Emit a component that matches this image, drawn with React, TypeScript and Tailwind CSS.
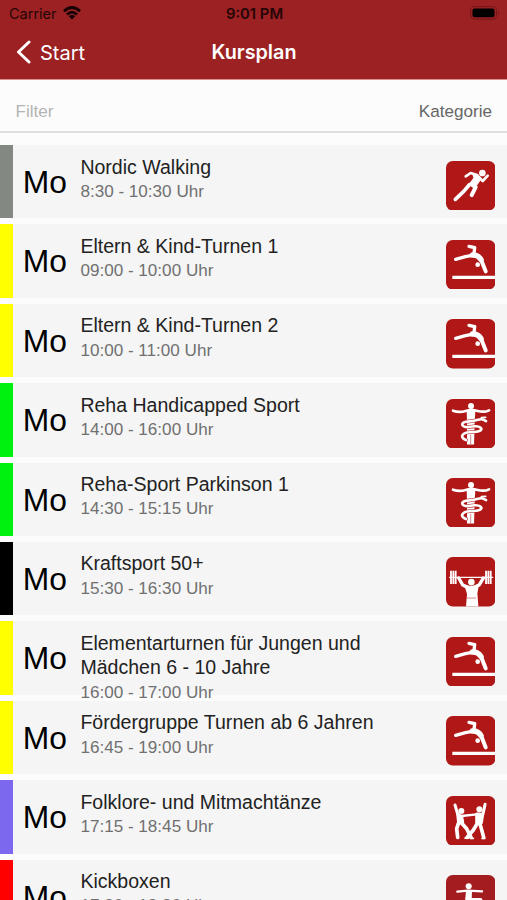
import type { ReactNode } from "react";

type Sport = "run" | "gymnastics" | "reha" | "weights" | "dance" | "kick";

type Course = {
  title: string;
  time: string;
  color: string;
  sport: Sport;
};

const courses: Course[] = [
  { title: "Nordic Walking", time: "8:30 - 10:30 Uhr", color: "bg-[#838982]", sport: "run" },
  { title: "Eltern & Kind-Turnen 1", time: "09:00 - 10:00 Uhr", color: "bg-[#ffff00]", sport: "gymnastics" },
  { title: "Eltern & Kind-Turnen 2", time: "10:00 - 11:00 Uhr", color: "bg-[#ffff00]", sport: "gymnastics" },
  { title: "Reha Handicapped Sport", time: "14:00 - 16:00 Uhr", color: "bg-[#00f010]", sport: "reha" },
  { title: "Reha-Sport Parkinson 1", time: "14:30 - 15:15 Uhr", color: "bg-[#00f010]", sport: "reha" },
  { title: "Kraftsport 50+", time: "15:30 - 16:30 Uhr", color: "bg-black", sport: "weights" },
  { title: "Elementarturnen für Jungen und Mädchen 6 - 10 Jahre", time: "16:00 - 17:00 Uhr", color: "bg-[#ffff00]", sport: "gymnastics" },
  { title: "Fördergruppe Turnen ab 6 Jahren", time: "16:45 - 19:00 Uhr", color: "bg-[#ffff00]", sport: "gymnastics" },
  { title: "Folklore- und Mitmachtänze", time: "17:15 - 18:45 Uhr", color: "bg-[#7b68ee]", sport: "dance" },
  { title: "Kickboxen", time: "17:30 - 18:30 Uhr", color: "bg-[#ff0000]", sport: "kick" },
];

const drawings: Record<Sport, ReactNode> = {
  run: (
    <>
      <circle cx="109" cy="36" r="10" fill="#fff" stroke="none" />
      <path d="M80 38 97 43 105 53 92 72 80 78 70 69 84 51Z" fill="#fff" strokeWidth="3" />
      <path d="M93 42 74 36 59 46" strokeWidth="8" />
      <path d="M98 48 110 60 125 44" strokeWidth="8" />
      <path d="M77 69 89 78 77 102" strokeWidth="12" />
      <path d="M70 71 53 91 28 115" strokeWidth="11" />
    </>
  ),
  gymnastics: (
    <>
      <path d="M69 19 86 23 84 40" strokeWidth="10" />
      <path d="M83 45 58 50 29 58" strokeWidth="10" />
      <path d="M79 45Q96 44 105 59" strokeWidth="16" />
      <path d="M104 56 119 94" strokeWidth="12" />
      <circle cx="95" cy="74" r="7" fill="#fff" stroke="none" />
      <path d="M19 112H149" strokeWidth="9" strokeLinecap="butt" />
    </>
  ),
  reha: (
    <>
      <circle cx="75" cy="21" r="9" fill="#fff" stroke="none" />
      <path d="M21 35Q39 42 59 36L75 32 95 36Q115 41 129 34" strokeWidth="8" />
      <path d="M62 32H88L86 72 84 136H63V78Z" fill="#fff" stroke="none" />
      <path
        d="M120 66C102 54 96 66 70 67C42 68 42 85 67 84C112 76 118 97 85 99C47 98 38 114 60 123"
        stroke="#b01717"
        strokeWidth="11"
      />
      <path
        d="M120 66C102 54 96 66 70 67C42 68 42 85 67 84C112 76 118 97 85 99C47 98 38 114 60 123"
        strokeWidth="8"
      />
      <path d="M74 108V134" stroke="#b01717" strokeWidth="1.5" />
      <path d="M106 56 119 55" strokeWidth="5" />
    </>
  ),
  weights: (
    <>
      <path d="M11 61H140" strokeWidth="4" />
      <path d="M15 41V81M22 41V81M29 41V81M120 41V81M127 41V81M134 41V81" strokeWidth="5.5" strokeLinecap="butt" />
      <path d="M38 63 50 84 65 91M112 63 99 84 84 91" strokeWidth="10" />
      <circle cx="76" cy="75" r="10" fill="#fff" stroke="none" />
      <path d="M54 82 68 86H84L99 82 94 109 97 148H60L63 111Z" fill="#fff" stroke="none" />
      <path d="M64 123H89" stroke="#b01717" strokeWidth="1.5" />
    </>
  ),
  dance: (
    <>
      <circle cx="46" cy="45" r="9" fill="#fff" stroke="none" />
      <circle cx="100" cy="40" r="9" fill="#fff" stroke="none" />
      <path d="M27 27 35 54" strokeWidth="9" />
      <path d="M117 25 111 53" strokeWidth="9" />
      <path d="M46 60 92 55" strokeWidth="7" />
      <path d="M35 54 47 62 50 78 38 82Z" fill="#fff" strokeWidth="9" />
      <path d="M92 54 110 55 106 80H92Z" fill="#fff" strokeWidth="9" />
      <path d="M38 80 32 98 35 124M46 80 62 98 75 124" strokeWidth="11" />
      <path d="M94 82 82 102 63 124M101 81 106 98 113 124" strokeWidth="11" />
      <path d="M57 126H68M75 127H82M108 127H116" strokeWidth="5" />
    </>
  ),
  kick: (
    <>
      <circle cx="68" cy="34" r="9" fill="#fff" stroke="none" />
      <path d="M34 50 66 47 108 49" strokeWidth="7" />
      <path d="M60 46H78L77 71H58Z" fill="#fff" stroke="none" />
      <path d="M68 74H104M63 70 61 94 68 119" strokeWidth="10" />
    </>
  ),
};

const SportIcon = ({ sport }: { sport: Sport }) => {
  return (
    <svg viewBox="0 0 148 148" className="size-[49.4px] shrink-0" fill="none" stroke="#fff" strokeLinecap="round" strokeLinejoin="round">
      <rect width="148" height="148" rx="20" fill={sport === "kick" ? "#a31d20" : "#b01717"} stroke="none" />
      {drawings[sport]}
    </svg>
  );
};

const CourseRow = ({ course }: { course: Course }) => {
  return (
    <li className="flex h-[73.4px] shrink-0 bg-[#f5f5f5]">
      <div className={`w-[13.3px] shrink-0 ${course.color}`} />
      <div className="w-[67.1px] shrink-0 pl-[9.5px] pt-[13px] text-[31.8px] leading-[48px] text-black">Mo</div>
      <div className="min-w-0 flex-1 pt-[9.5px]">
        <h2 className="w-[310px] text-[19.55px] leading-[24.4px] text-[#222]">{course.title}</h2>
        <p className="text-[17.1px] leading-[25.2px] text-[#707070]">{course.time}</p>
      </div>
      <div className="shrink-0 pr-3 pt-[15.5px]">
        <SportIcon sport={course.sport} />
      </div>
    </li>
  );
};

const StatusBar = () => {
  return (
    <div className="grid h-7 grid-cols-3 items-center pl-[9px] pr-[7px] text-[#250606]">
      <div className="flex items-center gap-[6px] text-[14.5px] leading-none">
        Carrier
        <svg viewBox="0 0 18 14" className="mb-[2px] h-[14px] w-[18px]" fill="none" stroke="#150303" strokeWidth="2.7">
          <path d="M1 5.2Q9-2.2 17 5.2M4 8.4Q9 3.8 14 8.4" />
          <path d="M5.8 10.2Q9 7.5 12.2 10.2L9 13.5Z" fill="#150303" stroke="none" />
        </svg>
      </div>
      <div className="text-center text-[14.8px] font-semibold leading-none">9:01 PM</div>
      <svg viewBox="0 0 30 14" className="mb-[2px] h-[14px] w-[30px] justify-self-end">
        <rect x=".6" y=".6" width="26" height="12.6" rx="4" fill="none" stroke="#741719" />
        <rect x="2.5" y="2.5" width="22" height="8.8" rx="2" fill="#000" />
        <path d="M28 5Q30 7 28 9Z" fill="#741719" />
      </svg>
    </div>
  );
};

export default function App() {
  return (
    <div className="flex h-[900px] w-[507px] flex-col overflow-hidden bg-[#fcfcfc] font-['Liberation_Sans',Arial,sans-serif]">
      <header className="h-[79.5px] shrink-0 border-b border-[#dc8f92] bg-[#9b2123] font-[Inter,sans-serif]">
        <StatusBar />
        <div className="grid h-[49px] grid-cols-3 items-center px-4 text-xl text-white">
          <button className="flex items-center gap-[9px]">
            <svg viewBox="0 0 15 24" className="mb-px h-6 w-[15px]" fill="none" stroke="currentColor" strokeWidth="3" strokeLinecap="round" strokeLinejoin="round">
              <path d="M13 2 2.5 12 13 22" />
            </svg>
            Start
          </button>
          <h1 className="pl-px text-center text-[19.8px] font-semibold">Kursplan</h1>
        </div>
      </header>
      <div className="flex h-[53.5px] shrink-0 items-center justify-between border-b-2 border-[#dedede] px-[15px] pt-[14px] text-[17.1px]">
        <span className="pl-[.5px] text-[#b4b4b4]">Filter</span>
        <span className="text-[#666]">Kategorie</span>
      </div>
      <ul className="flex flex-col gap-[6px] pt-3">
        {courses.map((course) => (
          <CourseRow key={course.title} course={course} />
        ))}
      </ul>
    </div>
  );
}
